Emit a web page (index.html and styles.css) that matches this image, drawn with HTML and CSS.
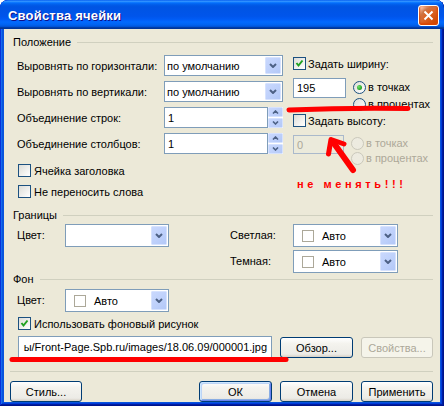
FILE: index.html
```html
<!DOCTYPE html>
<html lang="ru">
<head>
<meta charset="utf-8">
<title>Свойства ячейки</title>
<link rel="stylesheet" href="styles.css">
</head>
<body>
<div class="window">
  <div class="titlebar">
    <span class="title">Свойства ячейки</span>
    <span class="close"><svg width="11" height="11" viewBox="0 0 11 11"><path d="M1.5 1.5 L9.5 9.5 M9.5 1.5 L1.5 9.5" stroke="#fff" stroke-width="2" fill="none"/></svg></span>
  </div>
  <div class="client">
    <div class="ghead"><span>Положение</span><i></i></div>
    <div class="pos">
      <div class="pos-left">
        <div class="frow"><span class="flabel">Выровнять по горизонтали:</span><div class="combo c119"><span class="val">по умолчанию</span><span class="dd"><svg width="8" height="5" viewBox="0 0 8 5"><path d="M1 1 L4 4 L7 1" stroke="#4D6185" stroke-width="2" fill="none"/></svg></span></div></div>
        <div class="frow"><span class="flabel">Выровнять по вертикали:</span><div class="combo c119"><span class="val">по умолчанию</span><span class="dd"><svg width="8" height="5" viewBox="0 0 8 5"><path d="M1 1 L4 4 L7 1" stroke="#4D6185" stroke-width="2" fill="none"/></svg></span></div></div>
        <div class="frow"><span class="flabel">Объединение строк:</span><div class="spin"><span class="inp">1</span><span class="sbtns"><span class="sb"><svg width="7" height="4" viewBox="0 0 7 4"><path d="M1 3.5 L3.5 1 L6 3.5" stroke="#4D6185" stroke-width="1.6" fill="none"/></svg></span><span class="sb"><svg width="7" height="4" viewBox="0 0 7 4"><path d="M1 0.5 L3.5 3 L6 0.5" stroke="#4D6185" stroke-width="1.6" fill="none"/></svg></span></span></div></div>
        <div class="frow"><span class="flabel">Объединение столбцов:</span><div class="spin"><span class="inp">1</span><span class="sbtns"><span class="sb"><svg width="7" height="4" viewBox="0 0 7 4"><path d="M1 3.5 L3.5 1 L6 3.5" stroke="#4D6185" stroke-width="1.6" fill="none"/></svg></span><span class="sb"><svg width="7" height="4" viewBox="0 0 7 4"><path d="M1 0.5 L3.5 3 L6 0.5" stroke="#4D6185" stroke-width="1.6" fill="none"/></svg></span></span></div></div>
        <div class="chkrow first"><span class="chk"></span><span>Ячейка заголовка</span></div>
        <div class="chkrow next"><span class="chk"></span><span>Не переносить слова</span></div>
      </div>
      <div class="pos-right">
        <div class="chkrow r1"><span class="chk on"><svg width="11" height="11" viewBox="0 0 11 11"><path d="M2.5 5 L4.5 7.5 L8.5 2.5" stroke="#21A121" stroke-width="2" fill="none"/></svg></span><span>Задать ширину:</span></div>
        <div class="sizerow s1">
          <span class="num">195</span>
          <div class="radios">
            <div class="radrow"><span class="rad on"></span><span>в точках</span></div>
            <div class="radrow"><span class="rad"></span><span>в процентах</span></div>
          </div>
        </div>
        <div class="chkrow r2"><span class="chk"></span><span>Задать высоту:</span></div>
        <div class="sizerow s2">
          <span class="num dis">0</span>
          <div class="radios">
            <div class="radrow dis"><span class="rad"></span><span>в точках</span></div>
            <div class="radrow dis"><span class="rad"></span><span>в процентах</span></div>
          </div>
        </div>
      </div>
    </div>

    <div class="ghead gb"><span>Границы</span><i></i></div>
    <div class="borders">
      <div class="b-left">
        <span class="blabel">Цвет:</span>
        <div class="combo c104 tall"><span class="val"></span><span class="dd"><svg width="8" height="5" viewBox="0 0 8 5"><path d="M1 1 L4 4 L7 1" stroke="#4D6185" stroke-width="2" fill="none"/></svg></span></div>
      </div>
      <div class="b-right">
        <span class="rlabel">Светлая:</span>
        <div class="combo c105 tall"><span class="val"><span class="sw"></span>Авто</span><span class="dd"><svg width="8" height="5" viewBox="0 0 8 5"><path d="M1 1 L4 4 L7 1" stroke="#4D6185" stroke-width="2" fill="none"/></svg></span></div>
        <span class="rlabel">Темная:</span>
        <div class="combo c105 tall"><span class="val"><span class="sw"></span>Авто</span><span class="dd"><svg width="8" height="5" viewBox="0 0 8 5"><path d="M1 1 L4 4 L7 1" stroke="#4D6185" stroke-width="2" fill="none"/></svg></span></div>
      </div>
    </div>

    <div class="ghead gf"><span>Фон</span><i></i></div>
    <div class="bg">
      <div class="b-left bgcolor">
        <span class="blabel">Цвет:</span>
        <div class="combo c104 tall"><span class="val"><span class="sw"></span>Авто</span><span class="dd"><svg width="8" height="5" viewBox="0 0 8 5"><path d="M1 1 L4 4 L7 1" stroke="#4D6185" stroke-width="2" fill="none"/></svg></span></div>
      </div>
      <div class="chkrow bgchk"><span class="chk on"><svg width="11" height="11" viewBox="0 0 11 11"><path d="M2.5 5 L4.5 7.5 L8.5 2.5" stroke="#21A121" stroke-width="2" fill="none"/></svg></span><span>Использовать фоновый рисунок</span></div>
      <div class="pathrow">
        <div class="path"><span>ы/Front-Page.Spb.ru/images/18.06.09/000001.jpg</span></div>
        <span class="btn b73">Обзор...</span>
        <span class="btn b72 disabled">Свойства...</span>
      </div>
    </div>

    <div class="sep"></div>
    <div class="buttons">
      <span class="btn b72">Стиль...</span>
      <span class="btn b73 default push">ОК</span>
      <span class="btn b73">Отмена</span>
      <span class="btn b72">Применить</span>
    </div>
  </div>

  <svg class="annot" width="444" height="406" viewBox="0 0 444 406">
    <path d="M289 110 Q350 107.5 408 108.5" stroke="#f00" stroke-width="5" stroke-linecap="round" fill="none"/>
    <path d="M353 170 L333 142" stroke="#f00" stroke-width="6" stroke-linecap="round" fill="none"/>
    <path d="M328.5 154 L331 139.5 L344 144" stroke="#f00" stroke-width="5" stroke-linecap="round" stroke-linejoin="round" fill="none"/>
    <path d="M12 359.5 L286 359.5" stroke="#f00" stroke-width="5" stroke-linecap="round" fill="none"/>
  </svg>
  <div class="note">не менять!!!</div>
</div>
</body>
</html>
```

FILE: styles.css
```css
* { box-sizing: border-box; }
html, body { margin: 0; padding: 0; }
body {
  width: 444px;
  height: 406px;
  overflow: hidden;
  background: #fff;
  font-family: "Liberation Sans", Arial, sans-serif;
  font-size: 11px;
  color: #000;
}

.window {
  position: relative;
  width: 444px;
  height: 406px;
  display: flex;
  flex-direction: column;
  background: #0855DD;
  border-radius: 8px 8px 0 0;
  overflow: hidden;
  box-shadow: inset -1px -1px #00138c, inset 1px 1px #0831d9, inset -2px -2px #001ea0, inset 2px 2px #166aee, inset -3px -3px #003bda, inset 3px 3px #0855dd;
}

.titlebar {
  flex: none;
  height: 29px;
  display: flex;
  align-items: center;
  justify-content: space-between;
  padding: 0 5px 0 8px;
  background: linear-gradient(180deg, #0058ee 0%, #3593ff 4%, #288eff 6%, #127dff 8%, #036ffc 10%, #0262ee 14%, #0057e5 20%, #0054e3 24%, #0055eb 56%, #005bf5 66%, #026afe 76%, #0062ef 86%, #0052d6 92%, #0040ab 94%, #003092 100%);
  border-radius: 8px 8px 0 0;
}
.title {
  color: #fff;
  font-weight: bold;
  font-size: 13px;
  letter-spacing: 0.2px;
  text-shadow: 1px 1px 0 #0f1089;
  padding-top: 1px;
}
.close {
  width: 21px;
  height: 21px;
  margin-top: 1px;
  border: 1px solid #fff;
  border-radius: 3px;
  display: flex;
  align-items: center;
  justify-content: center;
  background: radial-gradient(circle at 90% 90%, #cc4600 0%, #dc6527 55%, #cd7546 70%, #ffccb2 90%, #fff 100%);
  box-shadow: inset 0 -1px 2px 1px #da4600;
}

.client {
  flex: 1;
  margin: 0 4px 4px 4px;
  background: #ECE9D8;
  padding: 7px 7px 0 6px;
  display: flex;
  flex-direction: column;
}

.ghead {
  display: flex;
  align-items: center;
  height: 13px;
  line-height: 13px;
  margin-left: 3px;
  white-space: nowrap;
}
.ghead i {
  flex: 1;
  height: 1px;
  background: #D0D0BF;
  margin-left: 6px;
  margin-top: -1px;
}
.ghead.gb { margin-top: 11px; }
.ghead.gf { margin-top: 0; }

.pos {
  display: flex;
  align-items: flex-start;
  margin-top: 6px;
  padding-left: 7px;
}
.pos-left { width: 266px; display: flex; flex-direction: column; }
.pos-right { margin-left: 10px; display: flex; flex-direction: column; }

.frow {
  display: flex;
  align-items: center;
  height: 21px;
  margin-bottom: 5px;
}
.flabel { width: 147px; white-space: nowrap; }

.combo {
  display: flex;
  align-items: stretch;
  height: 21px;
  border: 1px solid #7F9DB9;
  background: #fff;
}
.combo.tall { height: 23px; }
.c119 { width: 119px; }
.c104 { width: 104px; }
.c105 { width: 105px; }
.combo .val {
  flex: 1;
  display: flex;
  align-items: center;
  padding-left: 2px;
  white-space: nowrap;
}
.combo.tall .val { padding-left: 8px; }
.dd {
  width: 16px;
  margin: 1px;
  display: flex;
  align-items: center;
  justify-content: center;
  background: linear-gradient(135deg, #c9d8fd 0%, #bfd1fb 50%, #b3c8f7 100%);
  border: 1px solid #d6e2fe;
  border-radius: 1px;
}

.sw {
  width: 12px;
  height: 12px;
  border: 1px solid #ACA899;
  background: #fff;
  margin-right: 8px;
  flex: none;
}

.spin { display: flex; width: 119px; height: 21px; }
.inp {
  width: 104px;
  border: 1px solid #7F9DB9;
  background: #fff;
  padding-left: 3px;
  display: flex;
  align-items: center;
}
.sbtns {
  width: 15px;
  display: flex;
  flex-direction: column;
  gap: 1px;
  background: #fff;
  padding: 0 0 0 0;
}
.sb {
  flex: 1;
  display: flex;
  align-items: center;
  justify-content: center;
  background: linear-gradient(135deg, #c9d8fd 0%, #bfd1fb 50%, #b3c8f7 100%);
  border: 1px solid #d6e2fe;
  border-radius: 1px;
}

.chkrow {
  display: flex;
  align-items: center;
  height: 13px;
  white-space: nowrap;
}
.chkrow.first { margin-top: 5px; }
.chkrow.next { margin-top: 8px; }
.chk {
  width: 13px;
  height: 13px;
  flex: none;
  margin: 0 3px 0 1px;
  border: 1px solid #1C5180;
  background: linear-gradient(135deg, #dcdcd7 0%, #f5f5f3 70%, #ffffff 100%);
  display: flex;
  align-items: center;
  justify-content: center;
}
.pos-right .chk { margin: 0 2px 0 0; }
.chkrow.r1 { margin-top: 2px; }
.chkrow.r2 { margin-top: -1px; }

.sizerow { display: flex; align-items: flex-start; }
.sizerow.s1 { margin-top: 8px; }
.sizerow.s2 { margin-top: 8px; }
.num {
  width: 53px;
  height: 20px;
  border: 1px solid #7F9DB9;
  background: #fff;
  padding-left: 3px;
  display: flex;
  align-items: center;
}
.num.dis {
  width: 51px;
  height: 19px;
  border-color: #aab9cb;
  background: #EBEADB;
  color: #ACA899;
}
.radios { display: flex; flex-direction: column; margin-left: 7px; }
.s1 .radios { margin-top: 3px; }
.s2 .radios { margin-top: 2px; }
.radrow {
  display: flex;
  align-items: flex-start;
  height: 17px;
  line-height: 13px;
  white-space: nowrap;
}
.s2 .radrow { height: 15px; }
.rad {
  width: 13px;
  height: 13px;
  flex: none;
  border-radius: 50%;
  border: 1px solid #1C5180;
  background: linear-gradient(135deg, #dcdcd7 0%, #f5f5f3 70%, #fff 100%);
  margin-right: 2px;
  display: flex;
  align-items: center;
  justify-content: center;
}
.rad.on::after {
  content: "";
  width: 5px;
  height: 5px;
  border-radius: 50%;
  background: radial-gradient(circle at 35% 35%, #6fe06b 0%, #21A121 70%);
}
.radrow.dis { color: #ACA899; }
.radrow.dis .rad { border-color: #CAC8BB; background: #EDEBE0; }

.borders { display: flex; align-items: flex-start; margin-top: 2px; padding-left: 7px; }
.b-left { display: flex; align-items: flex-start; }
.blabel { width: 48px; line-height: 23px; }
.b-right {
  margin-left: 61px;
  display: grid;
  grid-template-columns: 63px 105px;
  row-gap: 3px;
}
.rlabel { line-height: 22px; }

.bg { display: flex; flex-direction: column; padding-left: 7px; }
.bgcolor { margin-top: 3px; }
.chkrow.bgchk { margin-top: 5px; }
.pathrow { display: flex; align-items: flex-start; margin-top: 6px; }
.path {
  width: 254px;
  height: 22px;
  margin-left: 1px;
  border: 1px solid #7F9DB9;
  background: #fff;
  display: flex;
  align-items: center;
  justify-content: flex-end;
  overflow: hidden;
  white-space: nowrap;
  padding-right: 4px;
}
.pathrow .btn { margin-top: 1px; margin-left: 8px; }

.btn {
  height: 21px;
  display: flex;
  align-items: center;
  justify-content: center;
  border: 1px solid #003C74;
  border-radius: 3px;
  background: linear-gradient(180deg, #ffffff 0%, #f4f3ee 30%, #ecebe6 85%, #d6d0c5 100%);
  white-space: nowrap;
}
.b73 { width: 73px; }
.b72 { width: 72px; }
.btn.disabled {
  border-color: #C9C7BA;
  background: #F5F4EA;
  color: #ACA899;
}
.btn.default {
  box-shadow: inset 1px 1px 0 #cee7ff, inset -1px -1px 0 #6982ee, inset 2px 2px 0 #bcd4f6, inset -2px -2px 0 #89ade4;
}

.sep {
  height: 1px;
  background: #D0D0BF;
  margin-top: 13px;
}
.buttons {
  display: flex;
  gap: 8px;
  margin-top: 9px;
}
.buttons .push { margin-left: auto; }

.annot {
  position: absolute;
  left: 0;
  top: 0;
  pointer-events: none;
}
.note {
  position: absolute;
  left: 297px;
  top: 178px;
  color: #ff0000;
  font-size: 11px;
  font-weight: bold;
  letter-spacing: 3.6px;
  white-space: nowrap;
}
```
